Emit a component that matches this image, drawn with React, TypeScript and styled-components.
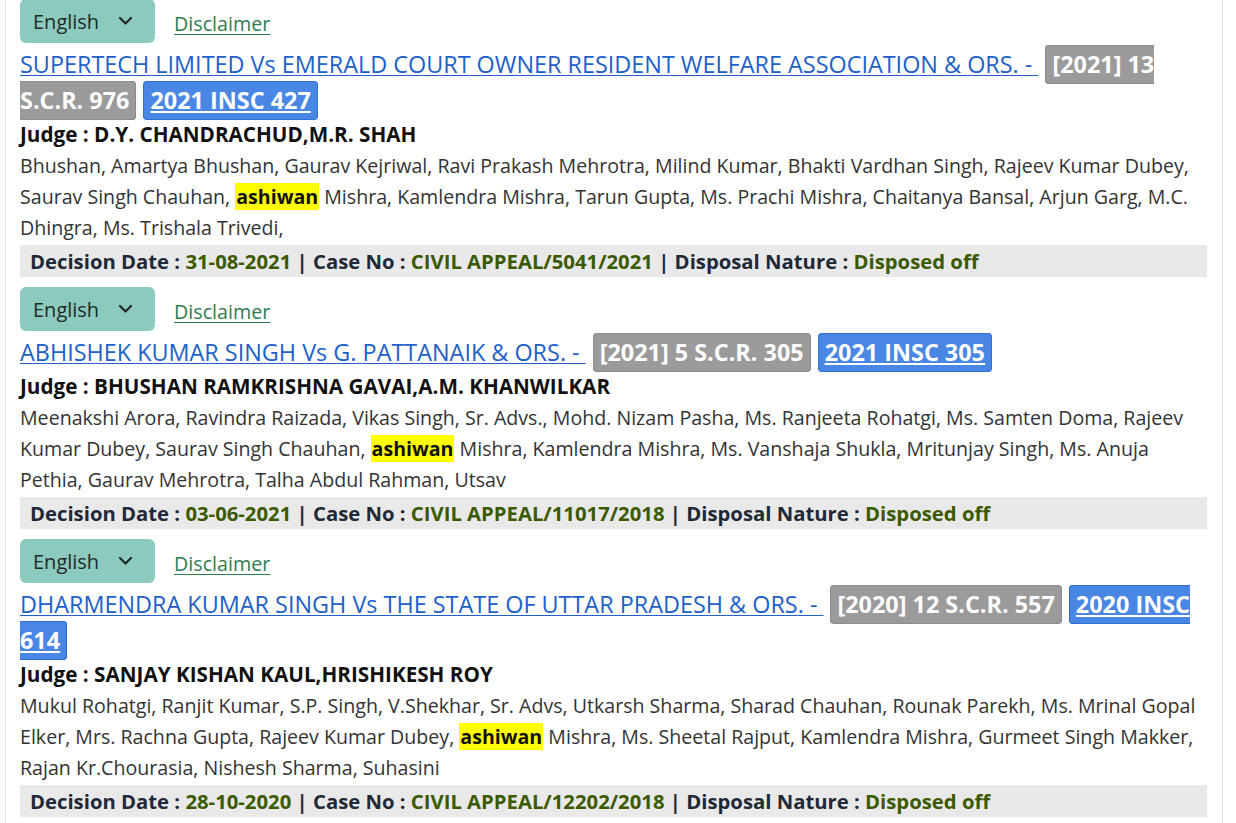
import React from 'react';
import styled, { createGlobalStyle } from 'styled-components';

const GlobalStyle = createGlobalStyle`
  body {
    margin: 0;
    background: #ffffff;
    font-family: 'Open Sans', 'Noto Sans', sans-serif;
    overflow: hidden;
  }
`;

const Page = styled.div`
  margin: -1px 0 0 5px;
  width: 1218px;
  box-sizing: border-box;
  border-left: 1px solid #e3e3e3;
  border-right: 1px solid #e3e3e3;
  padding: 0 15px 0 14px;
  min-height: 824px;
`;

const Entry = styled.div`
  margin-bottom: 10px;
`;

const Toolbar = styled.div`
  display: flex;
  align-items: center;
  gap: 19px;
  height: 44px;
`;

const LangSelect = styled.div`
  width: 135px;
  height: 44px;
  box-sizing: border-box;
  display: flex;
  align-items: center;
  justify-content: space-between;
  padding: 0 22px 0 13px;
  background: #8ccabd;
  border-radius: 6px;
  color: #1d2a2a;
  font-size: 20px;
`;

const Disclaimer = styled.a`
  color: #2e7d4f;
  font-size: 19.7px;
  text-decoration: underline;
  text-underline-offset: 3px;
  margin-top: 5px;
`;

const Title = styled.div`
  margin-top: 3px;
  font-size: 23.4px;
  line-height: 36px;
`;

const TitleLink = styled.a`
  color: #2160c8;
  text-decoration: underline;
  text-underline-offset: 2px;
  text-decoration-thickness: 1px;
`;

const Badge = styled.span<{ $tone: 'grey' | 'blue' }>`
  font-weight: 700;
  color: #ffffff;
  padding: 2px 6px 3px;
  margin-left: 7px;
  border-radius: 4px;
  background: ${(p) => (p.$tone === 'grey' ? '#9b9b9b' : '#4a86e4')};
  border: 1px solid ${(p) => (p.$tone === 'grey' ? '#8c8c8c' : '#2f6fd6')};
  text-decoration: ${(p) => (p.$tone === 'blue' ? 'underline' : 'none')};
  text-decoration-thickness: 2px;
  text-underline-offset: 2px;
`;

const Judge = styled.div`
  font-weight: 700;
  font-size: 20.7px;
  line-height: 32px;
  color: #111111;
`;

const Counsel = styled.div`
  font-size: 19.6px;
  line-height: 31px;
  color: #333333;
`;

const Hit = styled.span`
  background: #ffff00;
  color: #111111;
  font-weight: 700;
  padding: 0 1px;
`;

const InfoBar = styled.div`
  margin-top: 2px;
  height: 32px;
  display: flex;
  align-items: center;
  padding: 0 10px;
  background: #e9e9e9;
  font-weight: 700;
  font-size: 20.3px;
  color: #1f2937;
  white-space: pre;
`;

const Value = styled.span`
  color: #3b5a00;
`;

const Chevron = () => (
  <svg width="15" height="10" viewBox="0 0 15 10" fill="none">
    <polyline points="2,2 7.5,7.5 13,2" stroke="#1d2a2a" strokeWidth="2.2" strokeLinecap="round" strokeLinejoin="round" />
  </svg>
);

interface CaseData {
  title: string;
  scr: string;
  insc: string;
  judge: string;
  before: string;
  after: string;
  date: string;
  caseNo: string;
}

const cases: CaseData[] = [
  {
    title: 'SUPERTECH LIMITED Vs EMERALD COURT OWNER RESIDENT WELFARE ASSOCIATION & ORS. - ',
    scr: '[2021] 13 S.C.R. 976',
    insc: '2021 INSC 427',
    judge: 'D.Y. CHANDRACHUD,M.R. SHAH',
    before:
      'Bhushan, Amartya Bhushan, Gaurav Kejriwal, Ravi Prakash Mehrotra, Milind Kumar, Bhakti Vardhan Singh, Rajeev Kumar Dubey, Saurav Singh Chauhan, ',
    after:
      ' Mishra, Kamlendra Mishra, Tarun Gupta, Ms. Prachi Mishra, Chaitanya Bansal, Arjun Garg, M.C. Dhingra, Ms. Trishala Trivedi,',
    date: '31-08-2021',
    caseNo: 'CIVIL APPEAL/5041/2021',
  },
  {
    title: 'ABHISHEK KUMAR SINGH Vs G. PATTANAIK & ORS. - ',
    scr: '[2021] 5 S.C.R. 305',
    insc: '2021 INSC 305',
    judge: 'BHUSHAN RAMKRISHNA GAVAI,A.M. KHANWILKAR',
    before:
      'Meenakshi Arora, Ravindra Raizada, Vikas Singh, Sr. Advs., Mohd. Nizam Pasha, Ms. Ranjeeta Rohatgi, Ms. Samten Doma, Rajeev Kumar Dubey, Saurav Singh Chauhan, ',
    after:
      ' Mishra, Kamlendra Mishra, Ms. Vanshaja Shukla, Mritunjay Singh, Ms. Anuja Pethia, Gaurav Mehrotra, Talha Abdul Rahman, Utsav',
    date: '03-06-2021',
    caseNo: 'CIVIL APPEAL/11017/2018',
  },
  {
    title: 'DHARMENDRA KUMAR SINGH Vs THE STATE OF UTTAR PRADESH & ORS. - ',
    scr: '[2020] 12 S.C.R. 557',
    insc: '2020 INSC 614',
    judge: 'SANJAY KISHAN KAUL,HRISHIKESH ROY',
    before:
      'Mukul Rohatgi, Ranjit Kumar, S.P. Singh, V.Shekhar, Sr. Advs, Utkarsh Sharma, Sharad Chauhan, Rounak Parekh, Ms. Mrinal Gopal Elker, Mrs. Rachna Gupta, Rajeev Kumar Dubey, ',
    after:
      ' Mishra, Ms. Sheetal Rajput, Kamlendra Mishra, Gurmeet Singh Makker, Rajan Kr.Chourasia, Nishesh Sharma, Suhasini',
    date: '28-10-2020',
    caseNo: 'CIVIL APPEAL/12202/2018',
  },
];

const CaseEntry: React.FC<{ item: CaseData }> = ({ item }) => (
  <Entry>
    <Toolbar>
      <LangSelect>
        English
        <Chevron />
      </LangSelect>
      <Disclaimer href="#">Disclaimer</Disclaimer>
    </Toolbar>
    <Title>
      <TitleLink href="#">{item.title}</TitleLink>
      <Badge $tone="grey">{item.scr}</Badge>
      <Badge $tone="blue">{item.insc}</Badge>
    </Title>
    <Judge>Judge : {item.judge}</Judge>
    <Counsel>
      {item.before}
      <Hit>ashiwan</Hit>
      {item.after}
    </Counsel>
    <InfoBar>
      Decision Date : <Value>{item.date}</Value> | Case No : <Value>{item.caseNo}</Value> | Disposal Nature :{' '}
      <Value>Disposed off</Value>
    </InfoBar>
  </Entry>
);

const App: React.FC = () => (
  <>
    <GlobalStyle />
    <Page>
      {cases.map((c) => (
        <CaseEntry key={c.insc} item={c} />
      ))}
    </Page>
  </>
);

export default App;
